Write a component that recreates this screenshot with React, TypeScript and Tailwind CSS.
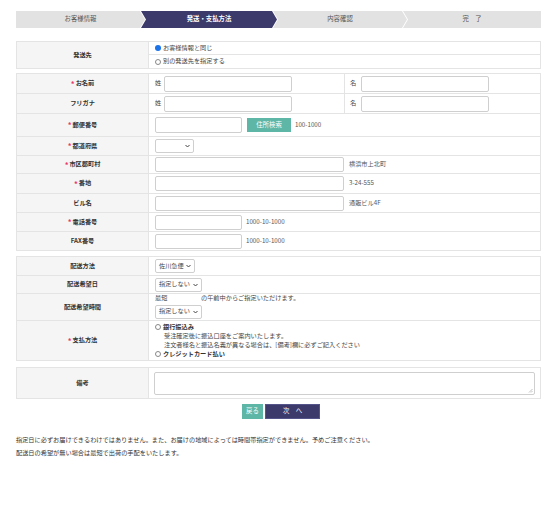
import React from "react";

function Req() {
  return <span className="text-[#ea3566] text-[7.5px] mr-[1px] leading-none">*</span>;
}

function L({ children, req }: { children: React.ReactNode; req?: boolean }) {
  return (
    <div className="w-[132px] shrink-0 self-stretch bg-[#f5f5f5] border-r border-[#e4e4e4] flex items-center justify-center font-bold text-[#333]">
      {req && <Req />}
      {children}
    </div>
  );
}

function Radio({ checked }: { checked?: boolean }) {
  return checked ? (
    <span className="inline-block w-[6px] h-[6px] rounded-full bg-[#1a73e8] mr-[2px] shrink-0" />
  ) : (
    <span className="inline-block w-[6px] h-[6px] rounded-full bg-white border border-[#888] mr-[2px] shrink-0" />
  );
}

function Chevron() {
  return (
    <svg width="5" height="4" viewBox="0 0 10 7" className="shrink-0">
      <path d="M1 1.5 L5 5.5 L9 1.5" fill="none" stroke="#444" strokeWidth="2" />
    </svg>
  );
}

function Sel({ text, w }: { text?: string; w: string }) {
  return (
    <div className={`${w} h-[14px] border border-[#cfcfcf] rounded-[2px] bg-white flex items-center justify-between pl-[3px] pr-[3px] text-[#444]`}>
      <span className="whitespace-nowrap">{text}</span>
      <Chevron />
    </div>
  );
}

function Inp({ w, h }: { w: string; h: string }) {
  return <div className={`${w} ${h} border border-[#cfcfcf] rounded-[2px] bg-white shrink-0`} />;
}

export default function App() {
  return (
    <div className="w-[560px] h-[518px] bg-white font-['Noto_Sans_CJK_JP','Noto_Sans',sans-serif] text-[6.2px] leading-none text-[#444]">
      {/* step bar */}
      <div className="pt-[11px] pl-[16px]">
        <div className="w-[525px] h-[17px] flex text-[6.4px]">
          <div className="w-[129px] h-full shrink-0 bg-[#e2e2e2] text-[#555] flex items-center justify-center [clip-path:polygon(0_0,calc(100%_-_5px)_0,100%_50%,calc(100%_-_5px)_100%,0_100%)]">
            お客様情報
          </div>
          <div className="w-[136px] h-full shrink-0 -ml-[4px] bg-[#3b3a6b] text-white font-bold flex items-center justify-center [clip-path:polygon(0_0,calc(100%_-_5px)_0,100%_50%,calc(100%_-_5px)_100%,0_100%,5px_50%)]">
            発送・支払方法
          </div>
          <div className="w-[134px] h-full shrink-0 -ml-[4px] bg-[#e2e2e2] text-[#555] flex items-center justify-center [clip-path:polygon(0_0,calc(100%_-_5px)_0,100%_50%,calc(100%_-_5px)_100%,0_100%,5px_50%)]">
            内容確認
          </div>
          <div className="w-[138px] h-full shrink-0 -ml-[4px] bg-[#e2e2e2] text-[#555] flex items-center justify-center [clip-path:polygon(0_0,100%_0,100%_100%,0_100%,5px_50%)]">
            完　了
          </div>
        </div>
      </div>

      <div className="pl-[16px]">
        {/* table 1 */}
        <div className="mt-[13px] w-[525px] border border-[#e4e4e4] flex">
          <L>発送先</L>
          <div className="flex-1 flex flex-col">
            <div className="h-[13px] border-b border-[#e4e4e4] flex items-center pl-[6px]">
              <Radio checked />
              <span>お客様情報と同じ</span>
            </div>
            <div className="h-[13px] flex items-center pl-[6px]">
              <Radio />
              <span>別の発送先を指定する</span>
            </div>
          </div>
        </div>

        {/* table 2 */}
        <div className="mt-[4px] w-[525px] border-x border-t border-[#e4e4e4]">
          <div className="flex h-[20px] border-b border-[#e4e4e4]">
            <L req>お名前</L>
            <div className="w-[196px] border-r border-[#e4e4e4] flex items-center pl-[6px] gap-[3px]">
              <span>姓</span>
              <Inp w="w-[128px]" h="h-[16px]" />
            </div>
            <div className="flex-1 flex items-center pl-[5px] gap-[5px]">
              <span>名</span>
              <Inp w="w-[128px]" h="h-[16px]" />
            </div>
          </div>
          <div className="flex h-[20px] border-b border-[#e4e4e4]">
            <L>フリガナ</L>
            <div className="w-[196px] border-r border-[#e4e4e4] flex items-center pl-[6px] gap-[3px]">
              <span>姓</span>
              <Inp w="w-[128px]" h="h-[16px]" />
            </div>
            <div className="flex-1 flex items-center pl-[5px] gap-[5px]">
              <span>名</span>
              <Inp w="w-[128px]" h="h-[16px]" />
            </div>
          </div>
          <div className="flex h-[23px] border-b border-[#e4e4e4]">
            <L req>郵便番号</L>
            <div className="flex-1 flex items-center pl-[6px]">
              <Inp w="w-[87px]" h="h-[16px]" />
              <div className="ml-[5px] w-[44px] h-[14px] bg-[#5db6a6] text-white text-[6.4px] flex items-center justify-center">住所検索</div>
              <span className="ml-[4px] text-[#555]">100-1000</span>
            </div>
          </div>
          <div className="flex h-[19px] border-b border-[#e4e4e4]">
            <L req>都道府県</L>
            <div className="flex-1 flex items-center pl-[6px]">
              <Sel w="w-[39px]" />
            </div>
          </div>
          <div className="flex h-[18px] border-b border-[#e4e4e4]">
            <L req>市区郡町村</L>
            <div className="flex-1 flex items-center pl-[6px]">
              <Inp w="w-[189px]" h="h-[15px]" />
              <span className="ml-[5px] text-[#555]">横浜市上北町</span>
            </div>
          </div>
          <div className="flex h-[20px] border-b border-[#e4e4e4]">
            <L req>番地</L>
            <div className="flex-1 flex items-center pl-[6px]">
              <Inp w="w-[189px]" h="h-[15px]" />
              <span className="ml-[5px] text-[#555]">3-24-555</span>
            </div>
          </div>
          <div className="flex h-[19px] border-b border-[#e4e4e4]">
            <L>ビル名</L>
            <div className="flex-1 flex items-center pl-[6px]">
              <Inp w="w-[189px]" h="h-[15px]" />
              <span className="ml-[5px] text-[#555]">通販ビル4F</span>
            </div>
          </div>
          <div className="flex h-[19px] border-b border-[#e4e4e4]">
            <L req>電話番号</L>
            <div className="flex-1 flex items-center pl-[6px]">
              <Inp w="w-[87px]" h="h-[15px]" />
              <span className="ml-[4px] text-[#555]">1000-10-1000</span>
            </div>
          </div>
          <div className="flex h-[19px] border-b border-[#e4e4e4]">
            <L>FAX番号</L>
            <div className="flex-1 flex items-center pl-[6px]">
              <Inp w="w-[87px]" h="h-[15px]" />
              <span className="ml-[4px] text-[#555]">1000-10-1000</span>
            </div>
          </div>
        </div>

        {/* table 3 */}
        <div className="mt-[5px] w-[525px] border-x border-t border-[#e4e4e4]">
          <div className="flex h-[19px] border-b border-[#e4e4e4]">
            <L>配送方法</L>
            <div className="flex-1 flex items-center pl-[6px]">
              <Sel w="w-[40px]" text="佐川急便" />
            </div>
          </div>
          <div className="flex h-[18px] border-b border-[#e4e4e4]">
            <L>配送希望日</L>
            <div className="flex-1 flex items-center pl-[6px]">
              <Sel w="w-[47px]" text="指定しない" />
            </div>
          </div>
          <div className="flex h-[27px] border-b border-[#e4e4e4]">
            <L>配送希望時間</L>
            <div className="flex-1 flex flex-col justify-center pl-[6px] gap-[3px]">
              <div className="flex">
                <span className="w-[46px]">最短</span>
                <span>の午前中からご指定いただけます。</span>
              </div>
              <Sel w="w-[47px]" text="指定しない" />
            </div>
          </div>
          <div className="flex h-[40px] border-b border-[#e4e4e4]">
            <L req>支払方法</L>
            <div className="flex-1 flex flex-col justify-center pl-[6px] gap-[2.6px]">
              <div className="flex items-center font-bold text-[#333]">
                <Radio />
                <span>銀行振込み</span>
              </div>
              <div className="pl-[9px]">受注確定後に振込口座をご案内いたします。</div>
              <div className="pl-[9px]">注文者様名と振込名義が異なる場合は、[備考]欄に必ずご記入ください</div>
              <div className="flex items-center font-bold text-[#333]">
                <Radio />
                <span>クレジットカード払い</span>
              </div>
            </div>
          </div>
        </div>

        {/* table 4 */}
        <div className="mt-[6px] w-[525px] border border-[#e4e4e4] flex h-[32px]">
          <L>備考</L>
          <div className="flex-1 flex items-center pl-[5px] pr-[5px]">
            <div className="relative w-full h-[23px] border border-[#cfcfcf] rounded-[2px] bg-white">
              <svg width="5" height="5" viewBox="0 0 10 10" className="absolute right-[1px] bottom-[1px]">
                <path d="M9 2 L2 9 M9 6 L6 9" stroke="#999" strokeWidth="1.2" />
              </svg>
            </div>
          </div>
        </div>
      </div>

      {/* buttons */}
      <div className="mt-[5px] flex justify-center gap-[2px] pl-[2px]">
        <div className="w-[21px] h-[15px] bg-[#5db6a6] text-white text-[6.4px] flex items-center justify-center">戻る</div>
        <div className="w-[55px] h-[15px] bg-[#3b3a6b] border border-[#55548a] text-white text-[6.4px] flex items-center justify-center">次　へ</div>
      </div>

      {/* footer */}
      <div className="mt-[14px] pl-[16px] text-[#333] leading-[13px]">
        <p>指定日に必ずお届けできるわけではありません。また、お届けの地域によっては時間帯指定ができません。予めご注意ください。</p>
        <p>配送日の希望が無い場合は最短で出荷の手配をいたします。</p>
      </div>
    </div>
  );
}
